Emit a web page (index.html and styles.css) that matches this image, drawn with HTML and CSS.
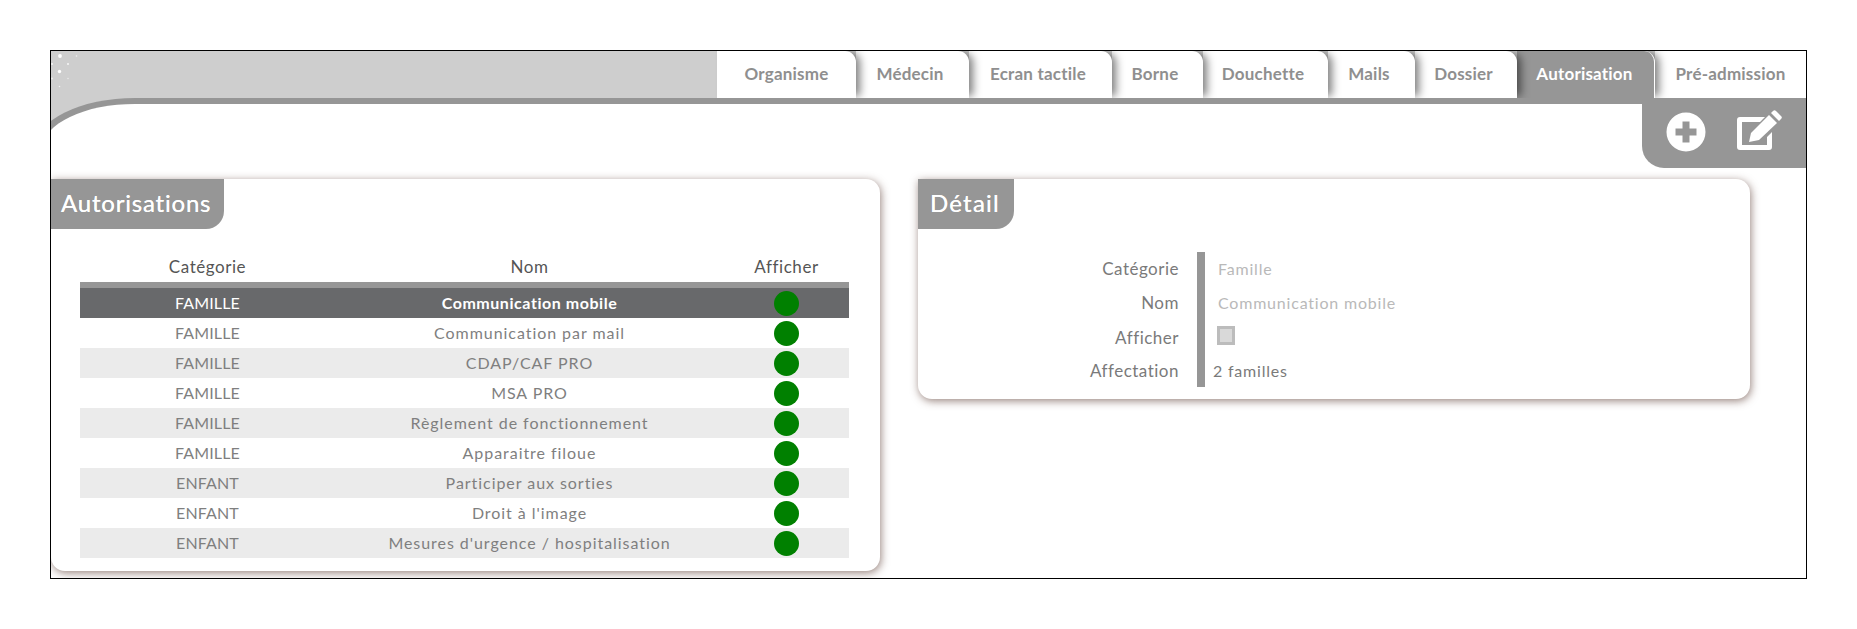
FILE: index.html
```html
<!DOCTYPE html>
<html lang="fr">
<head>
<meta charset="utf-8">
<title>Autorisation</title>
<link rel="stylesheet" href="styles.css">
</head>
<body>
<div class="frame">
  <svg class="sparkles" width="40" height="40" viewBox="0 0 40 40" aria-hidden="true">
    <circle cx="9" cy="5" r="1.9" fill="#fff"/>
    <circle cx="25.500" cy="5" r=".8" fill="#f2f2f2"/>
    <circle cx="17" cy="13" r="1" fill="#f6f6f6"/>
    <circle cx="1" cy="13" r="1" fill="#f6f6f6"/>
    <circle cx="8.500" cy="20.500" r="1.700" fill="#fff"/>
    <circle cx="17" cy="27.500" r=".7" fill="#eee"/>
    <circle cx="1" cy="27.500" r=".9" fill="#f2f2f2"/>
    <circle cx="8.500" cy="35.500" r=".8" fill="#f2f2f2"/>
  </svg>
  <nav class="tabs">
    <a class="tab t1">Organisme</a>
    <a class="tab t2">Médecin</a>
    <a class="tab t3">Ecran tactile</a>
    <a class="tab t4">Borne</a>
    <a class="tab t5">Douchette</a>
    <a class="tab t6">Mails</a>
    <a class="tab t7">Dossier</a>
    <a class="tab t8 active">Autorisation</a>
    <a class="tab t9">Pré-admission</a>
  </nav>
  <main class="main">
    <div class="toolbar">
      <svg class="icon-plus" width="40" height="40" viewBox="0 0 40 40" aria-hidden="true">
        <path fill="#fff" fill-rule="evenodd" d="M20 .5a19.5 19.5 0 1 0 0 39 19.5 19.5 0 0 0 0-39zM16.500 9.500h7v7h7v7h-7v7h-7v-7h-7v-7h7z"/>
      </svg>
      <svg class="icon-edit" width="48" height="42" viewBox="0 0 48 42" aria-hidden="true">
        <path fill="#fff" d="M3 7h25l-5 5H5v23h25V27l5-5v15a3 3 0 0 1-3 3H3a3 3 0 0 1-3-3V10a3 3 0 0 1 3-3z"/>
        <path fill="#fff" d="M12 32l2-9L32 5l8 8-18 17z"/>
        <path fill="#fff" d="M34 3l2-2a2 2 0 0 1 3 0l5 5a2 2 0 0 1 0 3l-2 2z"/>
      </svg>
    </div>
    <div class="panels">
      <section class="panel panel-list">
        <h2 class="panel-title">Autorisations</h2>
        <table class="grid">
          <colgroup><col class="c1"><col class="c2"><col class="c3"></colgroup>
          <thead><tr><th>Catégorie</th><th>Nom</th><th>Afficher</th></tr></thead>
          <tbody>
            <tr class="selected"><td>FAMILLE</td><td>Communication mobile</td><td class="cell-dot"><span class="dot"></span></td></tr>
            <tr><td>FAMILLE</td><td>Communication par mail</td><td class="cell-dot"><span class="dot"></span></td></tr>
            <tr><td>FAMILLE</td><td>CDAP/CAF PRO</td><td class="cell-dot"><span class="dot"></span></td></tr>
            <tr><td>FAMILLE</td><td>MSA PRO</td><td class="cell-dot"><span class="dot"></span></td></tr>
            <tr><td>FAMILLE</td><td>Règlement de fonctionnement</td><td class="cell-dot"><span class="dot"></span></td></tr>
            <tr><td>FAMILLE</td><td>Apparaitre filoue</td><td class="cell-dot"><span class="dot"></span></td></tr>
            <tr><td>ENFANT</td><td>Participer aux sorties</td><td class="cell-dot"><span class="dot"></span></td></tr>
            <tr><td>ENFANT</td><td>Droit à l'image</td><td class="cell-dot"><span class="dot"></span></td></tr>
            <tr><td>ENFANT</td><td>Mesures d'urgence / hospitalisation</td><td class="cell-dot"><span class="dot"></span></td></tr>
          </tbody>
        </table>
      </section>
      <section class="panel panel-detail">
        <h2 class="panel-title">Détail</h2>
        <div class="form">
          <div class="lbl">Catégorie</div><div class="val muted">Famille</div>
          <div class="lbl">Nom</div><div class="val muted">Communication mobile</div>
          <div class="lbl">Afficher</div><div class="val"><span class="check"></span></div>
          <div class="lbl">Affectation</div><div class="val plain">2 familles</div>
        </div>
      </section>
    </div>
  </main>
</div>
</body>
</html>
```
FILE: styles.css
```css
* { box-sizing: border-box; }
html, body { margin: 0; padding: 0; background: #fff; }
body { padding: 50px 50px 51px 50px; font-family: "Lato", "Liberation Sans", sans-serif; }
.frame {
  position: relative;
  width: 1757px;
  height: 529px;
  border: 1px solid #000;
  background: #cecece;
  overflow: hidden;
  display: flex;
  flex-direction: column;
}
.sparkles { position: absolute; left: 0; top: 0; }
.tabs { display: flex; justify-content: flex-end; height: 47px; flex: none; }
.tab {
  display: flex;
  align-items: center;
  justify-content: center;
  background: #fff;
  color: #8f8f8f;
  font-size: 17px;
  font-weight: 700;
  letter-spacing: .2px;
  position: relative;
  border-top-right-radius: 11px;
  box-shadow: 6px 0 9px -2px rgba(0,0,0,.5);
  padding: 0 5px 3px 0;
}
.t1 { width: 139px; z-index: 9; padding-right: 0; }
.t2 { width: 113px; z-index: 8; }
.t3 { width: 143px; z-index: 7; }
.t4 { width: 91px; z-index: 6; }
.t5 { width: 125px; z-index: 5; }
.t6 { width: 87px; z-index: 4; }
.t7 { width: 102px; z-index: 3; }
.t8 { width: 138px; z-index: 2; padding-right: 2px; }
.t9 { width: 151px; z-index: 1; box-shadow: none; border-top-right-radius: 0; padding-right: 0; }
.tab.active { background: #969696; color: #fff; border-right: 1px solid #fff; }
.main {
  position: relative;
  z-index: 10;
  flex: 1;
  margin-left: -16px;
  background: #fff;
  border-top: 6px solid #969696;
  border-left: 8px solid #969696;
  border-top-left-radius: 100px 50px;
  padding: 75px 0 0 8px;
}
.toolbar {
  position: absolute;
  right: 0;
  top: -6px;
  width: 164px;
  height: 70px;
  background: #969696;
  border-bottom-left-radius: 22px;
}
.icon-plus { position: absolute; left: 24px; top: 14px; }
.icon-edit { position: absolute; left: 95px; top: 12px; }
.panels { display: flex; gap: 38px; align-items: flex-start; }
.panel {
  background: #fff;
  border-radius: 0 14px 14px 14px;
  box-shadow: 1px 2px 9px rgba(95,65,55,.65);
}
.panel-list { width: 829px; height: 392px; }
.panel-detail { width: 832px; height: 220px; }
.panel-title {
  display: inline-block;
  margin: 0;
  height: 50px;
  padding: 0 0 0 10px;
  line-height: 48px;
  background: #969696;
  color: #fff;
  font-size: 24px;
  font-weight: 400;
  letter-spacing: .8px;
  text-shadow: 0 0 .6px #fff;
  border-bottom-right-radius: 18px;
}
.panel-list .panel-title { width: 173px; }
.panel-detail .panel-title { width: 96px; padding-left: 12px; letter-spacing: 1.2px; }
.grid {
  display: table;
  margin: 21px 0 0 29px;
  width: 769px;
  border-collapse: separate;
  border-spacing: 0;
  table-layout: fixed;
  font-size: 16px;
  letter-spacing: .95px;
}
.c1 { width: 255px; }
.c2 { width: 389px; }
.c3 { width: 125px; }
.grid th {
  height: 38px;
  padding: 0;
  font-size: 17px;
  letter-spacing: .55px;
  font-weight: 400;
  color: #555;
  text-align: center;
  border-bottom: 6px solid #969696;
}
.grid td {
  height: 30px;
  padding: 0 0 2px;
  text-align: center;
  color: #7f7f7f;
  vertical-align: middle;
}
.grid td:first-child { letter-spacing: .15px; }
.grid td.cell-dot { padding: 0; }
.grid tbody tr:nth-child(odd) { background: #ebebeb; }
.grid tbody tr.selected { background: #68696b; }
.grid tbody tr.selected td { color: #fff; font-weight: 700; letter-spacing: .55px; }
.grid tbody tr.selected td:first-child { font-weight: 400; letter-spacing: .15px; }
.dot {
  display: block;
  width: 25px;
  height: 25px;
  margin: 0 auto;
  border-radius: 50%;
  background: #008000;
}
.form {
  display: grid;
  grid-template-columns: 261px 1fr;
  grid-template-rows: 35px 34px 36px 30px;
  margin-top: 23px;
  font-size: 16px;
  letter-spacing: .8px;
}
.lbl {
  display: flex;
  align-items: center;
  justify-content: flex-end;
  padding-bottom: 3px;
  font-size: 17px;
  letter-spacing: .5px;
  color: #7a7a7a;
}
.val {
  margin-left: 18px;
  border-left: 8px solid #969696;
  padding: 0 0 3px 13px;
  display: flex;
  align-items: center;
}
.muted { color: #b9b9b9; }
.plain { color: #7a7a7a; padding-left: 8px; }
.check {
  display: block;
  width: 18px;
  height: 19px;
  margin: -4px 0 0 -1px;
  background: #d9d9d9;
  border: 3px solid #bcbcbc;
}
```
